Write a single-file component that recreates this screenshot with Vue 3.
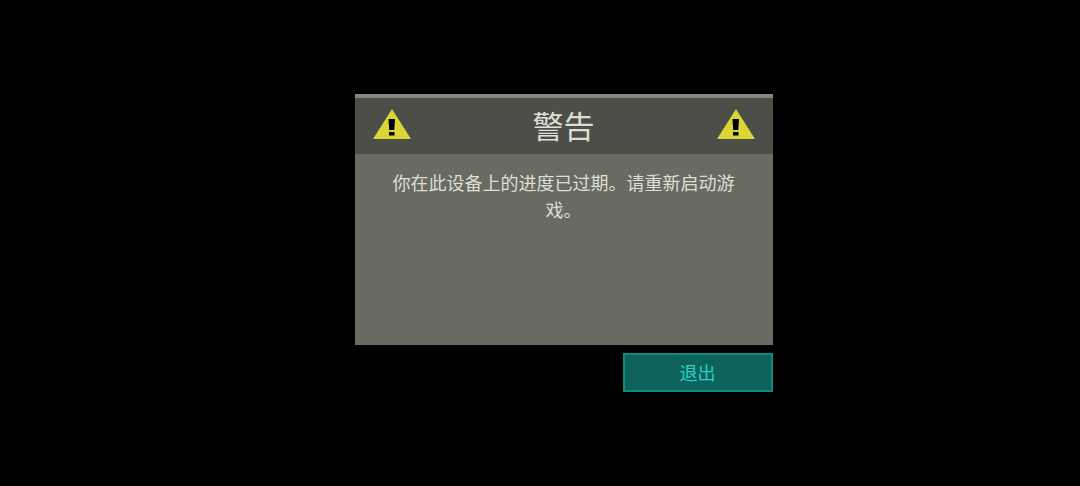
<template>
	<main class="screen">
		<div class="dialog" role="alertdialog" aria-labelledby="title" aria-describedby="message">
			<section class="panel">
				<header class="header">
					<svg class="icon" viewBox="0 0 38 30" aria-hidden="true">
						<path class="triangle" d="M19 0L38 30H0Z" />
						<path d="M15.5 10H22L21.3 21H16.2ZM16 23H21.5V26.5H16Z" />
					</svg>
					<h1 id="title">{{ title }}</h1>
					<svg class="icon" viewBox="0 0 38 30" aria-hidden="true">
						<path class="triangle" d="M19 0L38 30H0Z" />
						<path d="M15.5 10H22L21.3 21H16.2ZM16 23H21.5V26.5H16Z" />
					</svg>
				</header>
				<p id="message" class="message">{{ message }}</p>
			</section>
			<button v-if="!closed" type="button" class="exit" @click="exit">退出</button>
		</div>
	</main>
</template>

<script setup>
	import { ref } from "vue";

	const title = "警告";
	const message = "你在此设备上的进度已过期。请重新启动游戏。";
	const closed = ref(false);

	const exit = () => {
		closed.value = true;
		window.close();
	};
</script>

<style>
	body {
		margin: 0;
		background: #000;
	}
</style>

<style scoped>
	.screen {
		box-sizing: border-box;
		min-height: 100vh;
		padding-left: 47px;
		display: flex;
		align-items: center;
		justify-content: center;
		background: #000;
		font-family: "Noto Sans CJK SC", sans-serif;
		font-weight: 400;
	}

	.dialog {
		width: 100%;
		max-width: 418px;
		display: flex;
		flex-direction: column;
		gap: 8px;
	}

	.panel {
		background: #696b62;
	}

	.header {
		display: flex;
		align-items: center;
		justify-content: space-between;
		padding: 4px 18px 8px;
		border-top: 4px solid #84877b;
		background: #4c4e47;
	}

	.header h1 {
		margin: 0;
		padding: 3px 0 1px;
		font-size: 31px;
		font-weight: 400;
		line-height: 40px;
		color: #dcded6;
	}

	.icon {
		width: 38px;
		height: 30px;
	}

	.triangle {
		fill: #d9d636;
	}

	.message {
		box-sizing: border-box;
		min-height: 191px;
		margin: 0;
		padding: 15px 32px;
		font-size: 18px;
		line-height: 27px;
		text-align: center;
		color: #dcded6;
	}

	.exit {
		align-self: flex-end;
		width: 150px;
		padding: 4px;
		border: 2px solid #0f8c82;
		background: #0d625c;
		font: inherit;
		font-size: 18px;
		line-height: 27px;
		color: #2ccfc5;
		cursor: pointer;
	}

	.exit:hover {
		background: #0f746c;
	}
</style>
